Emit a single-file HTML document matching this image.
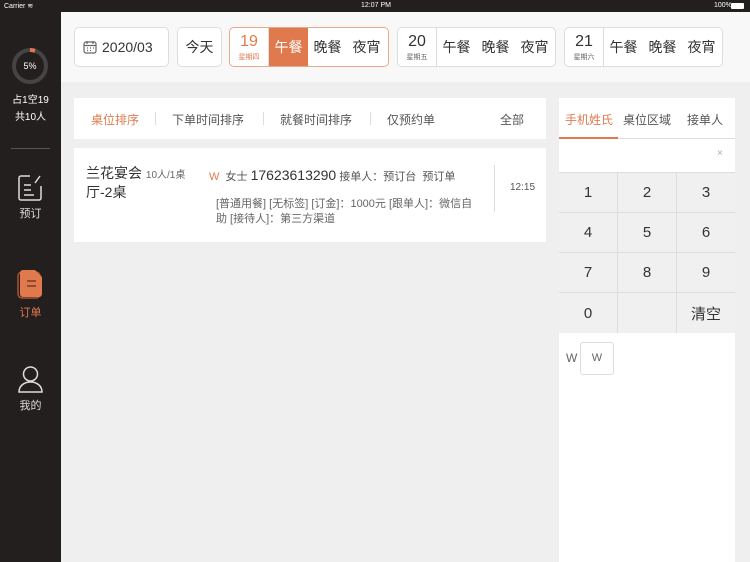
<!DOCTYPE html>
<html><head><meta charset="utf-8"><style>
*{margin:0;padding:0;box-sizing:border-box}
body{width:750px;height:562px;overflow:hidden;background:#efefef;font-family:"Liberation Sans","Noto Sans CJK SC",sans-serif;position:relative;color:#333}
.abs{position:absolute}
.status{left:0;top:0;width:750px;height:12px;background:#231f1e;color:#fff;font-size:7px}
.side{left:0;top:12px;width:61px;height:550px;background:#231f1e;color:#fff;text-align:center}
.hdr{left:61px;top:12px;width:689px;height:70px;background:#f8f8f8}
.box{background:#fff;border:1px solid #ddd;border-radius:5px;height:40px;top:27px;display:flex;align-items:center;font-size:14px;color:#333}
.seg{display:flex;align-items:center;justify-content:center;height:100%}
.day{flex-direction:column;width:39px;border-right:1px solid #ddd;line-height:1}
.day b{font-weight:normal;font-size:16px}
.day i{font-style:normal;font-size:7px;color:#666;margin-top:4px}
.meal{width:39px}
.tabs{left:74px;top:98px;width:472px;height:41px;background:#fff;font-size:12px;color:#555}
.tabs span{position:absolute;top:13px}
.sep{position:absolute;top:14px;width:1px;height:13px;background:#ddd}
.card{left:74px;top:148px;width:472px;height:94px;background:#fff}
.rp{left:559px;top:98px;width:176px;height:464px;background:#fff}
.key{position:absolute;background:#f0f0f0;border-right:1px solid #ddd;border-bottom:1px solid #ddd;display:flex;align-items:center;justify-content:center;font-size:15px;color:#333}
</style></head><body>
<div class="abs status"><span class="abs" style="left:4px;top:2px">Carrier ≋</span><span class="abs" style="left:361px;top:2px">12:07 PM</span><span class="abs" style="left:714px;top:2px">100%</span><span class="abs" style="left:731px;top:3px;width:13px;height:6px;background:#fff;border-radius:1px"></span></div>
<div class="abs side">
<svg class="abs" style="left:11px;top:35px" width="38" height="38"><circle cx="19" cy="19" r="16" fill="none" stroke="#444" stroke-width="4"/><path d="M19 3 A16 16 0 0 1 24 3.8" fill="none" stroke="#e07a4e" stroke-width="4"/><text x="19" y="22" font-size="9" fill="#fff" text-anchor="middle" font-family="Liberation Sans">5%</text></svg>
<div class="abs" style="left:0;width:61px;top:79px;font-size:10px">占1空19</div>
<div class="abs" style="left:0;width:61px;top:96px;font-size:10px">共10人</div>
<div class="abs" style="left:11px;top:136px;width:39px;height:1px;background:#555"></div>
<svg class="abs" style="left:17px;top:162px" width="27" height="30" fill="none" stroke="#ddd" stroke-width="1.5"><path d="M13 2H4a2 2 0 0 0-2 2v20a2 2 0 0 0 2 2h18a2 2 0 0 0 2-2V12"/><path d="M7 11h7M7 16h7M7 21h10M18 9l5-7"/></svg>
<div class="abs" style="left:0;width:61px;top:193px;font-size:11px;color:#ddd">预订</div>
<svg class="abs" style="left:17px;top:256px" width="28" height="32"><rect x="1" y="4" width="22" height="26" rx="4" fill="none" stroke="#a9532f" stroke-width="1.5"/><path d="M6 2h12l7 7v17a3 3 0 0 1-3 3H6a3 3 0 0 1-3-3V5a3 3 0 0 1 3-3z" fill="#e07a4e"/><path d="M10 13h9M10 18h9" stroke="#7a3a20" stroke-width="1.5"/></svg>
<div class="abs" style="left:0;width:61px;top:292px;font-size:11px;color:#e07a4e">订单</div>
<svg class="abs" style="left:17px;top:353px" width="27" height="29" fill="none" stroke="#ddd" stroke-width="1.5"><circle cx="13.5" cy="9" r="7"/><path d="M2 27c0-6 5-10 11.5-10S25 21 25 27z"/></svg>
<div class="abs" style="left:0;width:61px;top:385px;font-size:11px;color:#ddd">我的</div>
</div>
<div class="abs hdr"></div>
<div class="abs box" style="left:74px;width:95px"><svg style="margin-left:8px" width="14" height="14" fill="none" stroke="#666" stroke-width="1.2"><rect x="1" y="2" width="12" height="11" rx="2"/><path d="M1 5.5h12M4 1v3M10 1v3M4 8h1M7 8h1M10 8h1M4 10.5h1M7 10.5h1"/></svg><span style="margin-left:5px">2020/03</span></div>
<div class="abs box" style="left:177px;width:45px;justify-content:center">今天</div>
<div class="abs box" style="left:229px;width:160px;border-color:#e9a98a;overflow:hidden"><div class="seg day"><b style="color:#e07a4e">19</b><i style="color:#e07a4e">星期四</i></div><div class="seg meal" style="background:#e07a4e;color:#fff">午餐</div><div class="seg meal">晚餐</div><div class="seg meal">夜宵</div></div>
<div class="abs box" style="left:397px;width:159px"><div class="seg day"><b>20</b><i>星期五</i></div><div class="seg meal">午餐</div><div class="seg meal">晚餐</div><div class="seg meal">夜宵</div></div>
<div class="abs box" style="left:564px;width:159px"><div class="seg day"><b>21</b><i>星期六</i></div><div class="seg meal">午餐</div><div class="seg meal">晚餐</div><div class="seg meal">夜宵</div></div>
<div class="abs tabs"><span style="left:17px;color:#e07a4e">桌位排序</span><div class="sep" style="left:81px"></div><span style="left:98px">下单时间排序</span><div class="sep" style="left:189px"></div><span style="left:206px">就餐时间排序</span><div class="sep" style="left:296px"></div><span style="left:313px">仅预约单</span><span style="left:426px">全部</span></div>
<div class="abs card">
<div class="abs" style="left:12px;top:17px;font-size:14px;line-height:17px;width:115px">兰花宴会 <span style="font-size:10px;color:#666">10人/1桌</span><br>厅-2桌</div>
<div class="abs" style="left:135px;top:19px;font-size:11px;color:#555;white-space:nowrap"><span style="color:#e07a4e">W</span>&nbsp; 女士 <span style="font-size:14px;color:#333">17623613290</span> 接单人：预订台&nbsp; 预订单</div>
<div class="abs" style="left:142px;top:49px;width:273px;font-size:11px;line-height:15px;color:#666;word-break:break-all">[普通用餐] [无标签] [订金]：1000元 [跟单人]：微信自<br>助 [接待人]：第三方渠道</div>
<div class="abs" style="left:420px;top:17px;width:1px;height:47px;background:#ddd"></div>
<div class="abs" style="left:436px;top:34px;font-size:10px;color:#555">12:15</div>
</div>
<div class="abs rp">
<div class="abs" style="left:0;top:0;width:176px;height:41px;border-bottom:1px solid #ddd;font-size:12px;color:#555"><span class="abs" style="left:6px;top:13px;color:#e07a4e">手机姓氏</span><span class="abs" style="left:64px;top:13px">桌位区域</span><span class="abs" style="left:128px;top:13px">接单人</span><div class="abs" style="left:0;top:39px;width:59px;height:2px;background:#e07a4e"></div></div>
<div class="abs" style="left:158px;top:50px;font-size:10px;color:#aaa">×</div>
<div class="key" style="left:0;top:74px;width:59px;height:41px">1</div><div class="key" style="left:59px;top:74px;width:59px;height:41px">2</div><div class="key" style="left:118px;top:74px;width:58px;height:41px;border-right:0">3</div>
<div class="key" style="left:0;top:115px;width:59px;height:40px">4</div><div class="key" style="left:59px;top:115px;width:59px;height:40px">5</div><div class="key" style="left:118px;top:115px;width:58px;height:40px;border-right:0">6</div>
<div class="key" style="left:0;top:155px;width:59px;height:40px">7</div><div class="key" style="left:59px;top:155px;width:59px;height:40px">8</div><div class="key" style="left:118px;top:155px;width:58px;height:40px;border-right:0">9</div>
<div class="key" style="left:0;top:195px;width:59px;height:40px;border-bottom:0">0</div><div class="key" style="left:59px;top:195px;width:59px;height:40px;border-bottom:0"></div><div class="key" style="left:118px;top:195px;width:58px;height:40px;border:0">清空</div>
<div class="abs" style="left:0;top:74px;width:176px;height:1px;background:#ddd"></div>
<div class="abs" style="left:7px;top:253px;font-size:12px;color:#666">W</div>
<div class="abs" style="left:21px;top:244px;width:34px;height:33px;border:1px solid #ddd;border-radius:3px;font-size:11px;color:#666;text-align:center;line-height:31px">W</div>
</div>
</body></html>
